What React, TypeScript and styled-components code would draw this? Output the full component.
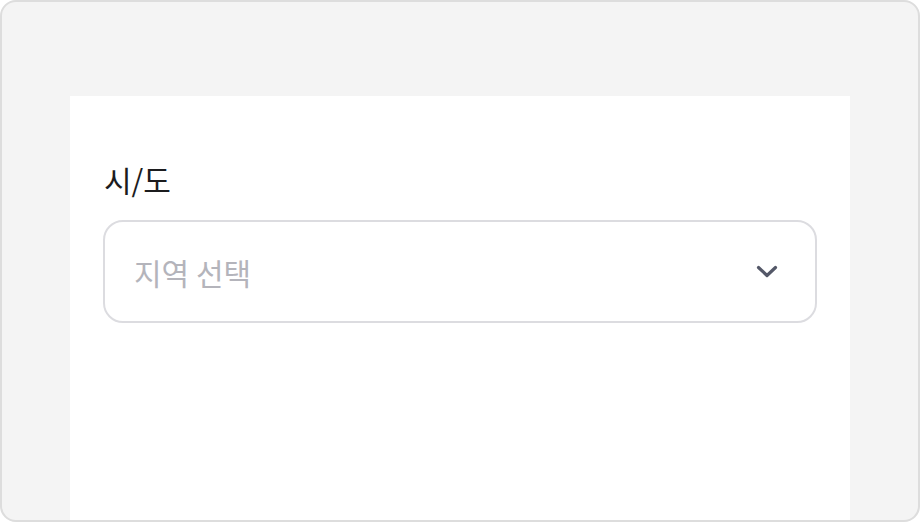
import React from "react";
import styled, { createGlobalStyle } from "styled-components";

const GlobalStyle = createGlobalStyle`
  html, body {
    margin: 0;
    padding: 0;
    background: #ffffff;
  }
  body {
    font-family: "Noto Sans CJK KR", "Noto Sans", sans-serif;
  }
  * {
    box-sizing: border-box;
  }
`;

const StyledFrame = styled.div`
  width: 920px;
  height: 522px;
  border: 2px solid #dddddd;
  border-radius: 16px;
  background: #f4f4f4;
  padding: 94px 68px 0 68px;
  overflow: hidden;
  display: flex;
`;

const StyledPanel = styled.div`
  flex: 1;
  background: #ffffff;
  padding: 63px 33px 0 33px;
  display: flex;
  flex-direction: column;
`;

const StyledLabel = styled.label`
  font-size: 30px;
  line-height: 40px;
  color: #1c1c1e;
  margin: 0 0 21px 1px;
`;

const StyledSelect = styled.div`
  height: 103px;
  border: 2px solid #dcdce0;
  border-radius: 20px;
  background: #ffffff;
  display: flex;
  align-items: center;
  justify-content: space-between;
  padding: 0 37px 0 29px;
`;

const StyledPlaceholder = styled.span`
  font-size: 30px;
  line-height: 40px;
  color: #b4b4bb;
`;

const Chevron: React.FC = () => (
  <svg width="22" height="14" viewBox="0 0 22 14" fill="none">
    <path
      d="M2.5 2.5 L11 10.5 L19.5 2.5"
      stroke="#545868"
      strokeWidth="3.2"
      strokeLinecap="round"
      strokeLinejoin="round"
    />
  </svg>
);

const App: React.FC = () => {
  return (
    <>
      <GlobalStyle />
      <StyledFrame>
        <StyledPanel>
          <StyledLabel children={"시/도"} />
          <StyledSelect>
            <StyledPlaceholder children={"지역 선택"} />
            <Chevron />
          </StyledSelect>
        </StyledPanel>
      </StyledFrame>
    </>
  );
};

export default App;
